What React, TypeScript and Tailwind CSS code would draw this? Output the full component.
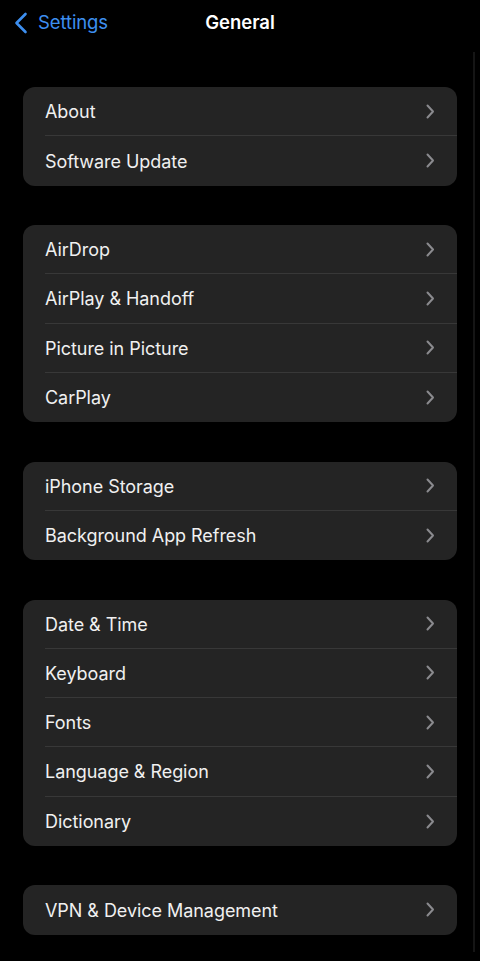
import React from "react";

const groups: string[][] = [
  ["About", "Software Update"],
  ["AirDrop", "AirPlay & Handoff", "Picture in Picture", "CarPlay"],
  ["iPhone Storage", "Background App Refresh"],
  ["Date & Time", "Keyboard", "Fonts", "Language & Region", "Dictionary"],
  ["VPN & Device Management"],
];

function Chevron() {
  return (
    <svg width="9" height="15" viewBox="0 0 9 15" className="shrink-0">
      <path d="M1.5 1.5 L7 7.5 L1.5 13.5" fill="none" stroke="#8a8a8e" strokeWidth="2" strokeLinecap="round" strokeLinejoin="round" />
    </svg>
  );
}

export default function App() {
  return (
    <div
      className="relative w-[480px] h-[961px] bg-black text-white overflow-hidden"
      style={{ fontFamily: "Inter, 'Noto Sans', sans-serif" }}
    >
      <div className="relative h-[45px] flex items-center">
        <div className="flex items-center pl-[14px] gap-[10px] text-[#3d8ff0]">
          <svg width="14" height="22" viewBox="0 0 14 22">
            <path d="M11.5 2 L2.5 11 L11.5 20" fill="none" stroke="#3d8ff0" strokeWidth="2.6" strokeLinecap="round" strokeLinejoin="round" />
          </svg>
          <span className="text-[18.5px] tracking-[-0.1px]">Settings</span>
        </div>
        <div className="absolute left-0 right-0 text-center text-[18.5px] font-semibold pointer-events-none">
          General
        </div>
      </div>
      <div className="flex flex-col gap-[39.5px] px-[23px] pt-[42px]">
        {groups.map((g, gi) => (
          <div key={gi} className="bg-[#242424] rounded-[12px] overflow-hidden">
            {g.map((item, i) => (
              <div key={item} className="flex items-center h-[49.25px] pl-[22px]">
                <div
                  className={
                    "flex-1 h-full flex items-center justify-between pr-[22px] " +
                    (i < g.length - 1 ? "border-b border-[#383838]" : "")
                  }
                >
                  <span className="text-[18px] text-[#f0f0f0] tracking-[-0.05px] pt-[1px]">{item}</span>
                  <Chevron />
                </div>
              </div>
            ))}
          </div>
        ))}
      </div>
      <div className="absolute right-[5px] top-[52px] w-[2px] h-[900px] bg-[#151515]" />
    </div>
  );
}
